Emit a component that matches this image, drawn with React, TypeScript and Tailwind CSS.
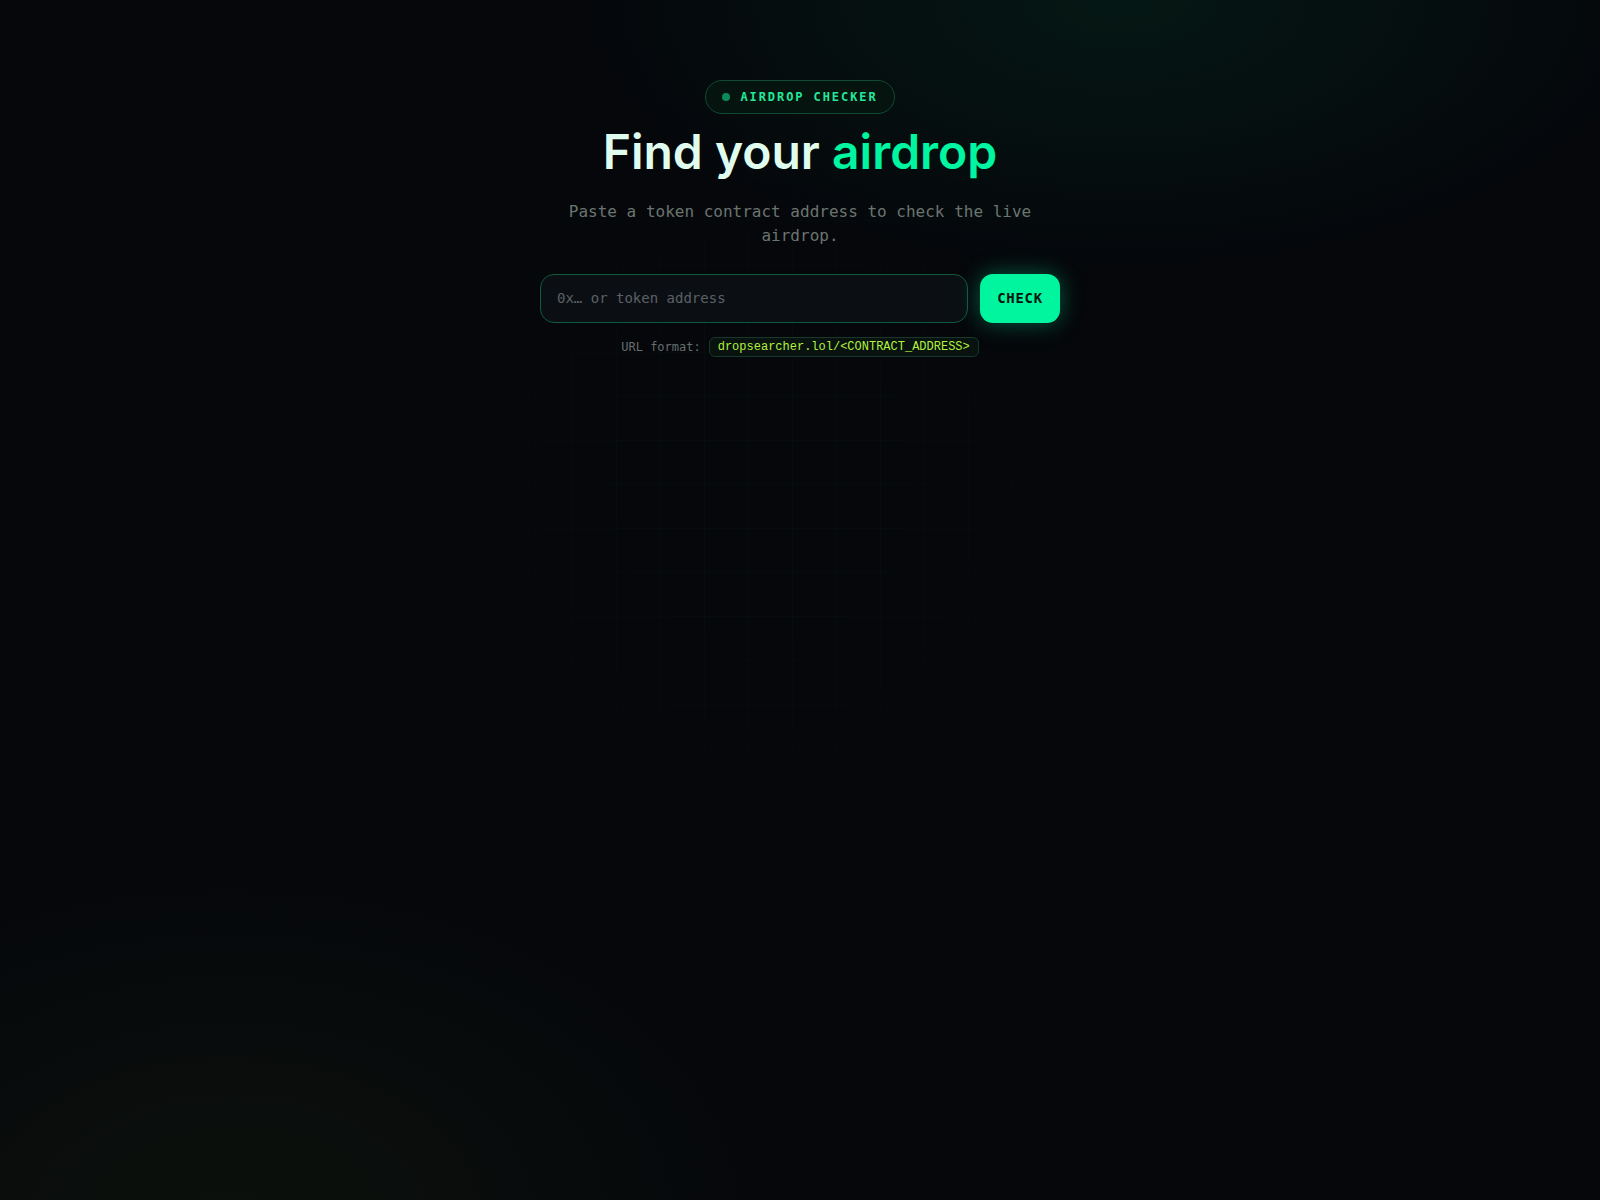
import { useState } from 'react';

const mono = "font-['DejaVu_Sans_Mono','Liberation_Mono',monospace]";

export default function App() {
  const [address, setAddress] = useState('');

  return (
    <main className="relative min-h-screen w-full overflow-hidden bg-[#05070b]">
      {/* glows + grid */}
      <div className="pointer-events-none absolute inset-0 bg-[radial-gradient(ellipse_540px_270px_at_1120px_0px,rgba(0,190,110,0.09),transparent_100%)]" />
      <div className="pointer-events-none absolute inset-0 bg-[radial-gradient(ellipse_560px_360px_at_230px_1220px,rgba(110,140,20,0.07),transparent_100%)]" />
      <div className="pointer-events-none absolute inset-0 bg-[linear-gradient(to_right,rgba(110,255,200,0.022)_1px,transparent_1px),linear-gradient(to_bottom,rgba(110,255,200,0.022)_1px,transparent_1px)] bg-[size:44px_44px] [mask-image:radial-gradient(ellipse_460px_520px_at_760px_480px,black_10%,transparent_100%)]" />

      <section className="relative flex flex-col items-center pt-20">
        <div className="flex items-center gap-2.5 rounded-full border border-[#0f4a33] bg-[#06140f] px-4 py-2">
          <span className="h-2 w-2 rounded-full bg-[#0c8a5a]" />
          <span className={`${mono} text-xs leading-4 font-bold tracking-[0.16em] text-[#22e89a]`}>
            AIRDROP CHECKER
          </span>
        </div>

        <h1 className="mt-3 font-['Inter','Noto_Sans',sans-serif] text-[48px] leading-[1.1] font-semibold text-[#dffcee]">
          Find your <span className="text-[#00f5a0]">airdrop</span>
        </h1>

        <p className={`${mono} mt-[21px] max-w-[480px] text-center text-base leading-6 text-[#6b7570]`}>
          Paste a token contract address to check the live airdrop.
        </p>

        <form
          className="mt-[26px] flex w-[520px] gap-3"
          onSubmit={(e) => e.preventDefault()}
        >
          <input
            value={address}
            onChange={(e) => setAddress(e.target.value)}
            placeholder="0x… or token address"
            className={`${mono} h-[49px] flex-1 rounded-[14px] border border-[#0e5a3c] bg-[#0b0f14] px-4 text-sm text-[#d8e6df] outline-none placeholder:text-[#5b6166]`}
          />
          <button
            type="submit"
            className={`${mono} h-[49px] w-20 rounded-[13px] bg-[#00f59e] text-sm font-bold tracking-[0.05em] text-[#04140d] shadow-[0_0_22px_rgba(0,245,160,0.35)]`}
          >
            CHECK
          </button>
        </form>

        <div className={`${mono} mt-[14px] flex items-center gap-2 text-xs leading-4`}>
          <span className="text-[#666e70]">URL format:</span>
          <code className="rounded-md border border-[#17382a] bg-[#08120e] px-2 py-px text-[#b4f03c]">
            dropsearcher.lol/&lt;CONTRACT_ADDRESS&gt;
          </code>
        </div>
      </section>
    </main>
  );
}
